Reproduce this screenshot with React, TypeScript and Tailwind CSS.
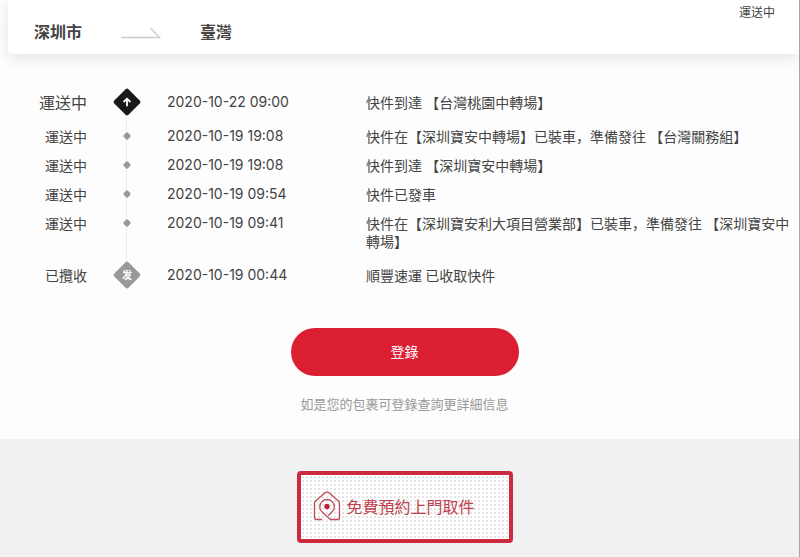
const events = [
  { status: '運送中', time: '2020-10-22 09:00', text: '快件到達 【台灣桃園中轉場】', kind: 'latest' },
  { status: '運送中', time: '2020-10-19 19:08', text: '快件在【深圳寶安中轉場】已裝車，準備發往 【台灣關務組】', kind: 'step' },
  { status: '運送中', time: '2020-10-19 19:08', text: '快件到達 【深圳寶安中轉場】', kind: 'step' },
  { status: '運送中', time: '2020-10-19 09:54', text: '快件已發車', kind: 'step' },
  { status: '運送中', time: '2020-10-19 09:41', text: '快件在【深圳寶安利大項目營業部】已裝車，準備發往 【深圳寶安中轉場】', kind: 'step' },
  { status: '已攬收', time: '2020-10-19 00:44', text: '順豐速運 已收取快件', kind: 'origin' },
]

function Marker({ kind }: { kind: string }) {
  if (kind === 'latest') {
    return (
      <svg width="28" height="28" viewBox="0 0 28 28" className="relative">
        <rect x="4" y="4" width="20" height="20" rx="2" fill="#1a1a1a" transform="rotate(45 14 14)" />
        <path d="M14 18.2v-7M10.6 14 14 10.7l3.4 3.3" fill="none" stroke="#fff" strokeWidth="1.8" />
      </svg>
    )
  }
  if (kind === 'origin') {
    return (
      <span className="relative flex size-7 items-center justify-center">
        <span className="absolute size-5 rotate-45 rounded-xs bg-[#999999]" />
        <span className="relative text-[10px] leading-none font-bold text-white">发</span>
      </span>
    )
  }
  return (
    <svg width="10" height="18" viewBox="0 0 10 18" className="relative">
      <rect x="2" y="6" width="6" height="6" rx="1.5" fill="#999" transform="rotate(45 5 9)" />
    </svg>
  )
}

export default function App() {
  return (
    <div className="overflow-hidden border-r border-[#a6a6a6] bg-[#fdfdfd] font-['Noto_Sans_CJK_SC',sans-serif] text-[#444444]">
      {/* ROUTE */}
      <header className="ml-2 flex justify-between rounded-bl bg-white pb-3 pl-[26px] pr-6 shadow-[0_4px_14px_rgba(0,0,0,0.1)]">
        <div className="flex items-center pt-5 text-base leading-[22px] font-bold">
          <span>深圳市</span>
          <svg width="40" height="12" viewBox="0 0 40 12" className="mx-[39px] mt-1">
            <path d="M0 10.5h38.5L29.5 1" fill="none" stroke="#cccccc" strokeWidth="1.4" />
          </svg>
          <span>臺灣</span>
        </div>
        <span className="pt-1 text-xs">運送中</span>
      </header>

      {/* TRACKING */}
      <ol className="relative mt-[34px] flex flex-col gap-[11px] text-sm leading-[18px]">
        <li className="absolute top-7 bottom-7 left-[126px] border-l border-dotted border-[#dddddd]" aria-hidden="true" />
        {events.map((event, i) => (
          <li
            key={i}
            className={`grid grid-cols-[87px_80px_199px_1fr] pr-2 ${event.kind === 'step' ? 'items-start' : 'items-center'}`}
          >
            <span className={event.kind === 'latest' ? 'text-right text-base leading-[18px]' : 'text-right'}>
              {event.status}
            </span>
            <span className="flex justify-center">
              <Marker kind={event.kind} />
            </span>
            <time className="font-[Inter,sans-serif]">{event.time}</time>
            <span>{event.text}</span>
          </li>
        ))}
      </ol>

      {/* LOGIN */}
      <div className="mt-[39px] ml-2.5 flex flex-col items-center">
        <button type="button" className="h-12 w-[228px] rounded-full bg-[#dc1e32] pb-0.5 text-sm text-white">
          登錄
        </button>
        <p className="mt-[19px] text-[13px] leading-[18px] text-[#999999]">如是您的包裹可登錄查詢更詳細信息</p>
      </div>

      {/* PICKUP */}
      <footer className="mt-[26px] flex justify-center bg-[#f1f1f1] pt-8 pb-3.5 pl-2.5">
        <a
          href="#pickup"
          className="flex h-[72px] w-[216px] items-center rounded-sm border-4 border-[#cc2a40] bg-white bg-[radial-gradient(#d0d0d0_0.5px,transparent_1px)] bg-[size:4px_4px] pb-0.5 pl-3 text-base text-[#c0404f]"
        >
          <svg width="28" height="30" viewBox="0 0 28 30" fill="none" stroke="#c04a58" strokeWidth="1.3" strokeLinecap="round" strokeLinejoin="round" className="mr-1.5">
            <path d="M8.500 28.500H3.500Q1.500 28.500 1.500 26.500V12.500Q1.500 11 2.600 10L12.300 1.500Q14 .3 15.700 1.500L25.400 10Q26.500 11 26.500 12.500V26.500Q26.500 28.500 24.500 28.500H17.500L9.200 21A7.200 7.200 0 1 1 18.900 21L15.600 24.200" />
            <circle cx="14" cy="15.500" r="2.700" fill="#bf2238" stroke="none" />
          </svg>
          免費預約上門取件
        </a>
      </footer>
    </div>
  )
}
